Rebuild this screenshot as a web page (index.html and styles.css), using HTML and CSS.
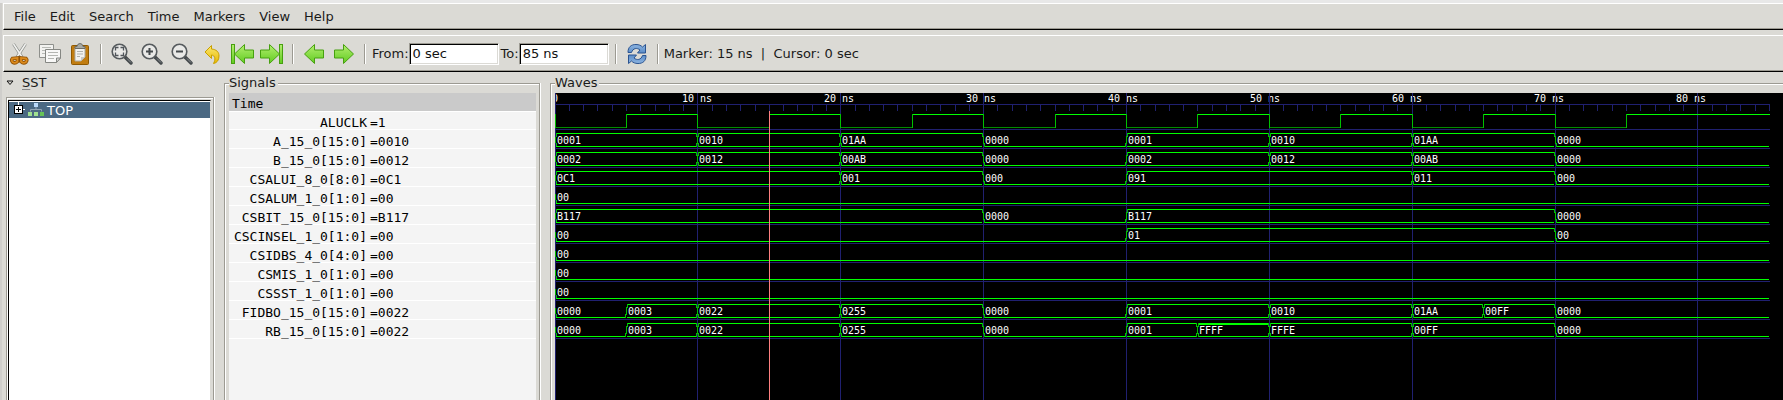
FILE: index.html
```html
<!DOCTYPE html>
<html lang="en">
<head>
<meta charset="utf-8">
<title>Waveform viewer</title>
<link rel="stylesheet" href="styles.css">
</head>
<body>
<nav class="menubar">
  <button>File</button><button>Edit</button><button>Search</button><button>Time</button><button>Markers</button><button>View</button><button>Help</button>
</nav>
<svg class="defs" width="0" height="0" aria-hidden="true">
  <defs>
    <linearGradient id="green" x1="0" y1="0" x2="0" y2="1"><stop offset="0" stop-color="#b4ee70"/><stop offset="1" stop-color="#60cc20"/></linearGradient>
    <linearGradient id="gold" x1="0" y1="0" x2="0" y2="1"><stop offset="0" stop-color="#fbe870"/><stop offset="1" stop-color="#e8b800"/></linearGradient>
    <linearGradient id="blue" x1="0" y1="0" x2="0" y2="1"><stop offset="0" stop-color="#8db4e0"/><stop offset="1" stop-color="#5a8cc8"/></linearGradient>
    <g id="lens"><path d="M14 14L20 20" stroke="#454a4d" stroke-width="3.4" stroke-linecap="round"/><path d="M16 15.500L20 19.500" stroke="#8b9094" stroke-width="1"/><circle cx="8.500" cy="8.500" r="7.300" fill="#e9e9e7" stroke="#555a5d" stroke-width="1.600"/></g>
    <path id="left" d="M1.500 11L11.500 1.500V7H20.500V15H11.500V20.500Z" fill="url(#green)" stroke="#47a010" stroke-linejoin="round"/>
  </defs>
</svg>
<div class="toolbar" role="toolbar" aria-label="Main">
  <div class="group">
    <button aria-label="Cut"><svg width="22" height="22" viewBox="0 0 22 22"><path d="M4.500 1L13 14M16.500 1L8 14" stroke="#8c8f8a" stroke-width="3"/><path d="M4.500 1L13 14M16.500 1L8 14" stroke="#f2f2f0" stroke-width="1.500"/><g fill="none" stroke="#8f5207" stroke-width="3.600"><path d="M3.500 15.500L8.500 15V18.500Q6 21 3.500 19Q2 17 3.500 15.500ZM17 15.500L12 15V18.500Q14.500 21 17 19Q18.500 17 17 15.500Z"/></g><g fill="none" stroke="#dc8a1c" stroke-width="1.800"><path d="M3.500 15.500L8.500 15V18.500Q6 21 3.500 19Q2 17 3.500 15.500ZM17 15.500L12 15V18.500Q14.500 21 17 19Q18.500 17 17 15.500Z"/></g></svg></button>
    <button aria-label="Copy"><svg width="22" height="22" viewBox="0 0 22 22"><path d="M.5 1.500H14.500V14.500H.5Z" fill="#f2f2f0" stroke="#8e908c"/><path d="M3 4.500H12M3 7.500H12M3 10.500H8" stroke="#b8bab6"/><path d="M6.500 6.500H21.500V15L17.500 19.500H6.500Z" fill="#f8f8f7" stroke="#858783"/><path d="M9 9.500H19M9 12.500H19M9 15.500H15" stroke="#b4b6b2"/><path d="M17.500 19.500V15H21.500Z" fill="#d8d8d6" stroke="#858783"/></svg></button>
    <button aria-label="Paste"><svg width="22" height="22" viewBox="0 0 22 22"><rect x="2.500" y="2.500" width="17" height="19" rx="1" fill="#c17d11" stroke="#8f5902"/><path d="M6 5H16V14L12 18H6Z" fill="#f2f2f0" stroke="#a8aaa6"/><path d="M8 8.500H14M8 11H14M8 13.500H11" stroke="#b0b2ae"/><path d="M12 18V14H16Z" fill="#c8c8c6"/><path d="M6 5.500V3.500H8Q8.500 .5 11 .5T14 3.500H16V5.500Z" fill="#a8aaa5" stroke="#6c6e6a"/></svg></button>
  </div>
  <span class="sep"></span>
  <div class="group">
    <button aria-label="Zoom fit"><svg width="22" height="22" viewBox="0 0 22 22"><use href="#lens"/><path d="M4.500 7.500V4.500H7.500M9.500 4.500H12.500V7.500M12.500 9.500V12.500H9.500M7.500 12.500H4.500V9.500" fill="none" stroke="#50555a" stroke-width="1.300"/></svg></button>
    <button aria-label="Zoom in"><svg width="22" height="22" viewBox="0 0 22 22"><use href="#lens"/><path d="M5 8.500H12M8.500 5V12" stroke="#454a4d" stroke-width="2"/></svg></button>
    <button aria-label="Zoom out"><svg width="22" height="22" viewBox="0 0 22 22"><use href="#lens"/><path d="M5 8.500H12" stroke="#454a4d" stroke-width="2"/></svg></button>
    <button aria-label="Zoom undo"><svg width="22" height="22" viewBox="0 0 22 22"><path d="M4 9L10.500 2.500V6C15.500 6.500 18 9 18 13C18 17 16 20 12.500 20.500C15 16 14 12.500 10.500 12V15.500Z" fill="url(#gold)" stroke="#c9a000" stroke-linejoin="round"/></svg></button>
    <button aria-label="Zoom to start"><svg width="24" height="22" viewBox="0 0 24 22"><rect x="1.500" y="1.500" width="3" height="19" fill="url(#green)" stroke="#47a010"/><use href="#left" x="3"/></svg></button>
    <button aria-label="Zoom to end"><svg width="24" height="22" viewBox="0 0 24 22"><rect x="19.500" y="1.500" width="3" height="19" fill="url(#green)" stroke="#47a010"/><use href="#left" transform="matrix(-1 0 0 1 21 0)"/></svg></button>
  </div>
  <span class="sep"></span>
  <div class="group">
    <button aria-label="Previous edge"><svg width="22" height="22" viewBox="0 0 22 22"><use href="#left"/></svg></button>
    <button aria-label="Next edge"><svg width="22" height="22" viewBox="0 0 22 22"><use href="#left" transform="matrix(-1 0 0 1 22 0)"/></svg></button>
  </div>
  <span class="sep"></span>
  <div class="range">
    <label for="from">From:</label><input id="from" type="text" value="0 sec">
    <label for="to">To:</label><input id="to" type="text" value="85 ns">
  </div>
  <span class="sep"></span>
  <div class="group">
    <button aria-label="Reload"><svg width="22" height="22" viewBox="0 0 22 22"><path id="arc" d="M2 9.500C2 4 5 1.500 10 1.500C13 1.500 15 2.500 16.500 4L19.500 1.500V10H11.500L14 7C11 4.500 7 5 5.500 9.500Z" fill="url(#blue)" stroke="#2a5390" stroke-linejoin="round"/><use href="#arc" transform="rotate(180 11 11)"/></svg></button>
  </div>
  <span class="sep"></span>
  <output class="status">Marker: 15 ns&nbsp; |&nbsp; Cursor: 0 sec</output>
</div>
<main class="panes">
  <section class="sst">
    <h2 class="sst-title"><svg width="8" height="6" viewBox="0 0 8 6"><path d="M1 1H7L4 4.500Z" fill="none" stroke="#111"/></svg><span><u>S</u>ST</span></h2>
    <div class="tree-frame">
      <div class="tree" role="tree">
        <div class="node" role="treeitem" aria-selected="true">
          <svg width="11" height="16" viewBox="0 0 11 16"><path d="M4.500 0V3M9 7.500H11" stroke="#fff"/><rect x=".5" y="3.500" width="8" height="8" fill="#fff" stroke="#000"/><path d="M2 7.500H7M4.500 5V10" stroke="#000"/></svg>
          <svg width="16" height="16" viewBox="0 0 16 16"><path d="M8 5V7.500M2.500 9.500V7.500H13.500V9.500" fill="none" stroke="#93a5b3"/><path d="M6 1H10V5H6Z" fill="#b8d8f8"/><path d="M0 10H4V14H0ZM6 10H10V14H6Z" fill="#a0e090"/><path d="M12 10H16V14H12Z" fill="#68c458"/></svg>
          <span>TOP</span>
        </div>
      </div>
    </div>
  </section>
  <fieldset class="frame signals">
    <legend>Signals</legend>
    <div class="siglist">
      <div class="sighead">Time</div>
      <dl>
        <div><dt>ALUCLK</dt><dd>=1</dd></div>
        <div><dt>A_15_0[15:0]</dt><dd>=0010</dd></div>
        <div><dt>B_15_0[15:0]</dt><dd>=0012</dd></div>
        <div><dt>CSALUI_8_0[8:0]</dt><dd>=0C1</dd></div>
        <div><dt>CSALUM_1_0[1:0]</dt><dd>=00</dd></div>
        <div><dt>CSBIT_15_0[15:0]</dt><dd>=B117</dd></div>
        <div><dt>CSCINSEL_1_0[1:0]</dt><dd>=00</dd></div>
        <div><dt>CSIDBS_4_0[4:0]</dt><dd>=00</dd></div>
        <div><dt>CSMIS_1_0[1:0]</dt><dd>=00</dd></div>
        <div><dt>CSSST_1_0[1:0]</dt><dd>=00</dd></div>
        <div><dt>FIDBO_15_0[15:0]</dt><dd>=0022</dd></div>
        <div><dt>RB_15_0[15:0]</dt><dd>=0022</dd></div>
      </dl>
    </div>
  </fieldset>
  <fieldset class="frame waves">
    <legend>Waves</legend>
    <svg id="waves" class="wavebox" role="img" aria-label="Signal waveforms, 0 to 85 ns"></svg>
  </fieldset>
</main>
<script src="waves.js"></script>
</body>
</html>
```

FILE: styles.css
```css
* { box-sizing: border-box; }
body {
  margin: 0;
  height: 100vh;
  padding-left: 3px;
  display: flex;
  flex-direction: column;
  overflow: hidden;
  background: #dbdad5;
  border-top: 3px solid #e8e8e8;
  color: #1a1a1a;
  font: 13px/16px "DejaVu Sans", sans-serif;
  box-shadow: inset 2px 0 #cfcecb;
}
button { font: inherit; color: inherit; background: none; border: 0; padding: 0; }
svg { display: block; }
.defs { position: absolute; }
.menubar, .toolbar {
  display: flex;
  flex: none;
  border: solid;
  border-width: 1px 0 1px 1px;
  border-color: #fff #fff #000 #fff;
  box-shadow: inset 0 -1px #9c9a92;
}
.menubar { gap: 14px; height: 27px; padding: 0 10px; }
.toolbar { align-items: center; height: 37px; margin-top: 5px; padding-left: 4px; }
.group { display: flex; gap: 6px; }
.group button { width: 24px; display: flex; justify-content: center; }
.sep {
  width: 2px;
  height: 20px;
  margin: 0 8px;
  border-left: 1px solid #9c9a92;
  border-right: 1px solid #fff;
}
.range { display: flex; align-items: center; margin: 0 -2px; }
.range input {
  width: 90px;
  height: 22px;
  padding: 0 3px;
  font: inherit;
  color: #111;
  background: #fff;
  border: 1px solid;
  border-color: #9c9a92 #fff #fff #9c9a92;
  box-shadow: inset 1px 1px #000, inset -1px -1px #dbdad5;
}
.range input + label { margin-left: 2px; }
.status { margin-left: -3px; }
.panes { display: flex; flex: 1; min-height: 0; }

.sst {
  width: 211px;
  flex: none;
  display: flex;
  flex-direction: column;
  margin-right: 10px;
  padding: 2px 0 0 3px;
}
.sst-title {
  display: flex;
  align-items: center;
  gap: 8px;
  margin: 0 0 6px;
  height: 17px;
  font: inherit;
}
.sst-title u { text-decoration-color: #888; text-underline-offset: 2px; }
.tree-frame {
  flex: 1;
  border: solid;
  border-width: 1px 1px 0 1px;
  border-color: #9c9a92;
  box-shadow: inset 1px 1px #fff, 1px 0 #fff;
  padding: 2px 2px 0 1px;
}
.tree {
  height: 100%;
  padding-top: 1px;
  background: #fff;
  border: solid;
  border-width: 1px 1px 0 1px;
  border-color: #000 #dbdad5 #000 #000;
}
.node {
  display: flex;
  align-items: center;
  height: 16px;
  padding-left: 5px;
  background: #4b6983;
  color: #fff;
}
.node svg + svg { margin: 0 3px; }
.node span { padding-top: 2px; }

.frame {
  min-width: 0;
  margin: 3px 0 -6px;
  padding: 2px 3px 0 4px;
  border: 1px solid #9c9a92;
  box-shadow: inset 1px 1px #fff, 1px 0 #fff;
  display: flex;
  flex-direction: column;
}
.frame legend { padding: 0 2px 0 0; background: #dbdad5; }
.signals { width: 316px; flex: none; margin-right: 10px; }
.siglist {
  flex: 1;
  background: #f4f4f4;
  color: #000;
  font: 13px/15px "DejaVu Sans Mono", monospace;
}
.sighead {
  padding: 3px 3px 0;
  background: #cacaca;
  border-bottom: 1px solid #fff;
}
.siglist dl, .siglist dd { margin: 0; }
.siglist dl > div {
  display: grid;
  grid-template-columns: 135px 1fr;
  gap: 3px;
  height: 19px;
  padding: 4px 0 0 3px;
  border-bottom: 1px solid #fff;
}
.siglist dl > div:first-child { height: 18px; padding-top: 3px; }
.siglist dt { text-align: right; white-space: nowrap; }

.waves { flex: 1; margin-right: -6px; }
.wavebox { width: 100%; height: 100%; flex: 1; min-height: 0; background: #000; }
.wavebox text { font: 10px "DejaVu Sans Mono", monospace; fill: #fff; }
.grid { fill: #202070; }
.wire { fill: #00ff00; }
.edge { fill: #00c000; }
.low { fill: #008c00; }
.marker { fill: #ff8080; }
```

FILE: waves.js
```js
const END = 85;
const PX_PER_NS = 14.287;
const RULER_Y = 11;
const FIRST_ROW = 18;
const ROW = 19;

const ab = (...v) => [0, 10, 20, 30, 40, 50, 60, 70].map((t, i) => [t, v[i]]);
const buses = [
  ab('0001', '0010', '01AA', '0000', '0001', '0010', '01AA', '0000'),
  ab('0002', '0012', '00AB', '0000', '0002', '0012', '00AB', '0000'),
  [[0, '0C1'], [20, '001'], [30, '000'], [40, '091'], [60, '011'], [70, '000']],
  [[0, '00']],
  [[0, 'B117'], [30, '0000'], [40, 'B117'], [70, '0000']],
  [[0, '00'], [40, '01'], [70, '00']],
  [[0, '00']],
  [[0, '00']],
  [[0, '00']],
  [[0, '0000'], [5, '0003'], [10, '0022'], [20, '0255'], [30, '0000'], [40, '0001'],
   [50, '0010'], [60, '01AA'], [65, '00FF'], [70, '0000']],
  [[0, '0000'], [5, '0003'], [10, '0022'], [20, '0255'], [30, '0000'], [40, '0001'],
   [45, 'FFFF'], [50, 'FFFE'], [60, '00FF'], [70, '0000']],
];

const svg = document.getElementById('waves');
const px = t => Math.floor(t * PX_PER_NS);
const isZero = v => /^0+$/.test(v);

function add(tag, attrs, text) {
  const el = document.createElementNS('http://www.w3.org/2000/svg', tag);
  for (const k in attrs) el.setAttribute(k, attrs[k]);
  if (text) el.textContent = text;
  svg.append(el);
}
const box = (cls, x, y, width, height) => add('rect', { class: cls, x, y, width, height });

// Time ruler
add('text', { x: -3, y: 9 }, '0');
for (let k = 1; k <= 8; k++) add('text', { x: 127 + 142 * (k - 1), y: 9 }, `${k * 10} ns`);
box('grid', 0, RULER_Y, px(END) + 1, 1);
for (let t = 0; t <= END; t++) box('grid', px(t), RULER_Y, 1, 7);
for (let t = 0; t < END; t += 10) box('grid', px(t), 0, 1, '100%');
for (let i = 0; i <= buses.length; i++) box('grid', 0, FIRST_ROW + 18 + i * ROW, px(END) + 1, 1);

// Clock
for (let t = 0; t < END; t += 5) {
  const high = t % 10 === 5 || t > 75;
  const x = px(t);
  box(high ? 'wire' : 'low', x, high ? 21 : 34, px(t + 5) - x + 1, 1);
  if (t <= 75) box('edge', x, 21, 1, 14);
}

// Buses
buses.forEach((segments, i) => {
  const top = 40 + i * ROW;
  const bottom = top + 13;
  segments.forEach(([t, value], n) => {
    const x = px(t);
    const last = n === segments.length - 1;
    const end = last ? px(END) : px(segments[n + 1][0]) - 1;
    const zero = isZero(value);
    const prevZero = n > 0 && isZero(segments[n - 1][1]);
    box('wire', x + 1, bottom, end - x - 1, 1);
    if (!zero) box('wire', x + 1, top, end - x - 1, /^F+$/.test(value) ? 2 : 1);
    if (n === 0) {
      box('edge', x, top + 4, 1, 6);
      box('edge', x + 1, bottom - 3, 1, 3);
      if (!zero) box('edge', x + 1, top, 1, 4);
    } else {
      box('edge', x, top + 3, 1, 8);
      box('edge', x - 1, prevZero ? bottom - 3 : top, 1, 4);
      box('edge', x + 1, zero ? bottom - 3 : top, 1, 4);
      if (!zero && !prevZero) {
        box('edge', x - 1, bottom - 3, 1, 4);
        box('edge', x + 1, bottom - 3, 1, 4);
      }
    }
    add('text', { x: x + 2, y: bottom - 2 }, value);
  });
});

box('marker', px(15), FIRST_ROW, 1, '100%');
```
